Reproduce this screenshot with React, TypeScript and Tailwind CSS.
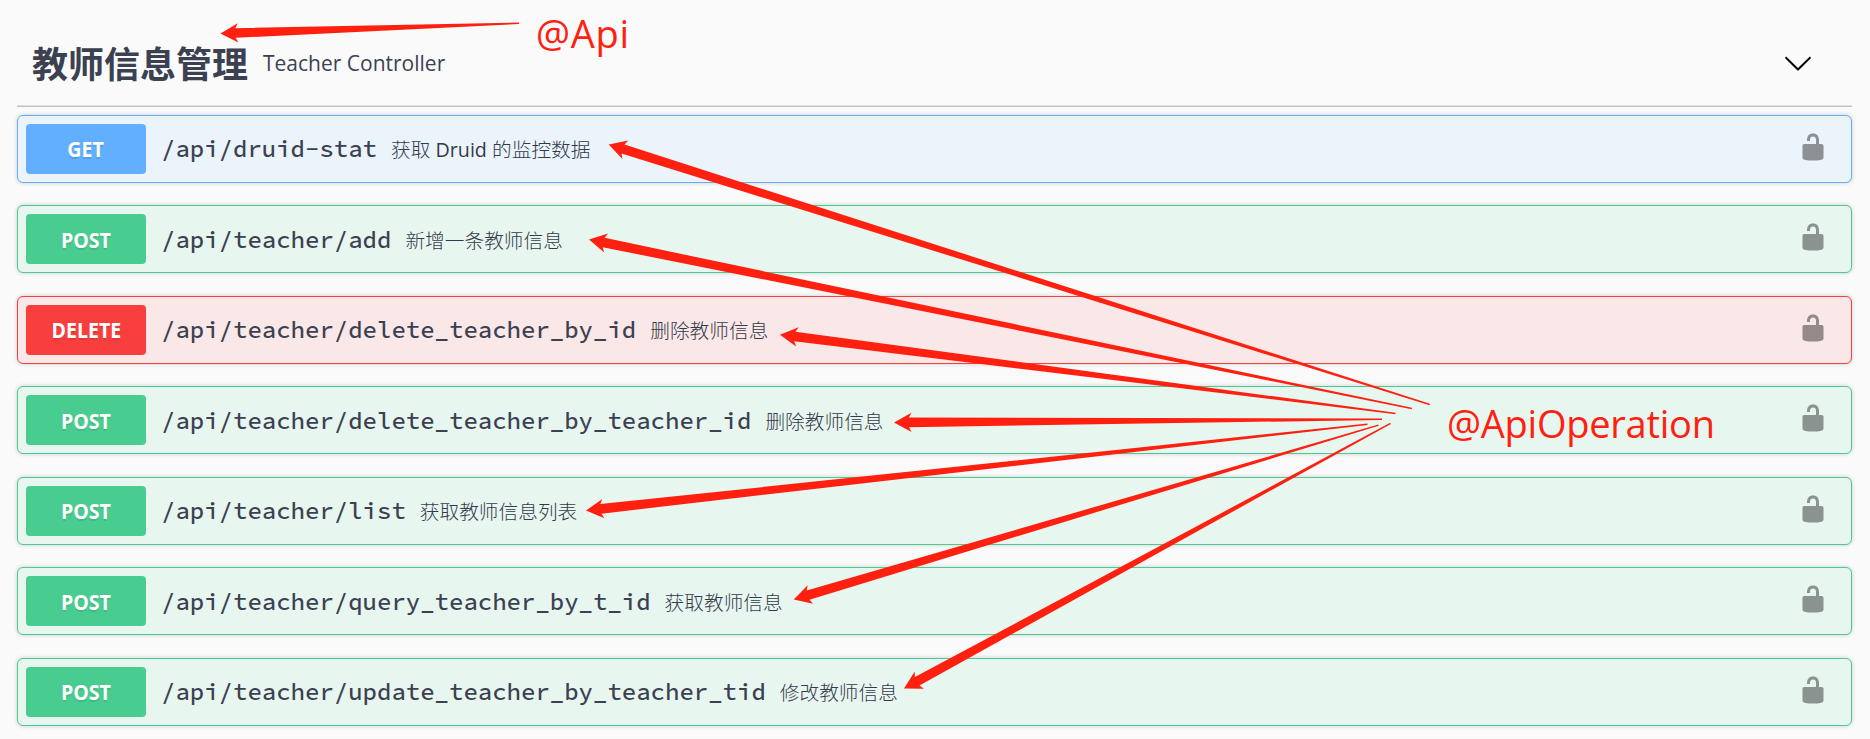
type Method = 'GET' | 'POST' | 'DELETE';

interface Operation {
  method: Method;
  path: string;
  summary: string;
}

interface Arrow {
  tip: [number, number];
  tail: [number, number];
}

const operations: Operation[] = [
  { method: 'GET', path: '/api/druid-stat', summary: '获取 Druid 的监控数据' },
  { method: 'POST', path: '/api/teacher/add', summary: '新增一条教师信息' },
  { method: 'DELETE', path: '/api/teacher/delete_teacher_by_id', summary: '删除教师信息' },
  { method: 'POST', path: '/api/teacher/delete_teacher_by_teacher_id', summary: '删除教师信息' },
  { method: 'POST', path: '/api/teacher/list', summary: '获取教师信息列表' },
  { method: 'POST', path: '/api/teacher/query_teacher_by_t_id', summary: '获取教师信息' },
  { method: 'POST', path: '/api/teacher/update_teacher_by_teacher_tid', summary: '修改教师信息' },
];

const arrows: Arrow[] = [
  { tip: [220.5, 33.5], tail: [519, 23.3] },
  { tip: [608.7, 144.5], tail: [1429.7, 404.5] },
  { tip: [589, 239.5], tail: [1411.8, 408.5] },
  { tip: [780, 334.7], tail: [1395.5, 413.5] },
  { tip: [894, 422.5], tail: [1382, 419.2] },
  { tip: [586, 510.5], tail: [1367.5, 424.3] },
  { tip: [793.7, 599.5], tail: [1378.5, 425.2] },
  { tip: [904, 688.5], tail: [1390.5, 423.3] },
];

const rowStyles: Record<Method, string> = {
  GET: 'border-[#61affe] bg-[#ebf3fb]',
  POST: 'border-[#49cc90] bg-[#e8f6f0]',
  DELETE: 'border-[#f93e3e] bg-[#fae7e7]',
};

const badgeStyles: Record<Method, string> = {
  GET: 'bg-[#61affe]',
  POST: 'bg-[#49cc90]',
  DELETE: 'bg-[#f93e3e]',
};

/** Outline of an arrow whose shaft narrows from the head to the tail. */
function arrowPoints({ tip, tail }: Arrow): string {
  const dx = tail[0] - tip[0];
  const dy = tail[1] - tip[1];
  const length = Math.hypot(dx, dy);
  const ux = dx / length;
  const uy = dy / length;
  const outline: [number, number][] = [
    [0, 0],
    [17.5, -9.7],
    [15, -4.8],
    [length, -0.7],
    [length, 0.7],
    [15, 4.8],
    [17.5, 9.7],
  ];
  return outline
    .map(([along, across]) => {
      const x = tip[0] + ux * along - uy * across;
      const y = tip[1] + uy * along + ux * across;
      return `${x.toFixed(2)},${y.toFixed(2)}`;
    })
    .join(' ');
}

function UnlockIcon() {
  return (
    <svg viewBox="0 0 20 20" className="h-[30px] w-[30px] fill-black opacity-40" aria-hidden="true">
      <path d="M15.8 8H14V5.6C14 2.703 12.665 1 10 1 7.334 1 6 2.703 6 5.6V6h2v-.801C8 3.754 8.797 3 10 3c1.203 0 2 .754 2 2.199V8H4c-.553 0-1 .646-1 1.199V17c0 .549.428 1.139.951 1.307l1.197.387C5.672 18.861 6.55 19 7.1 19h5.8c.549 0 1.428-.139 1.951-.307l1.196-.387c.524-.167.953-.757.953-1.306V9.199C17 8.646 16.352 8 15.8 8z" />
    </svg>
  );
}

function ChevronIcon() {
  return (
    <svg viewBox="0 0 20 20" className="-mt-0.5 h-[30px] w-[30px] fill-black" aria-hidden="true">
      <path d="M17.418 6.109c.272-.268.709-.268.979 0s.271.701 0 .969l-7.908 7.83c-.27.268-.707.268-.979 0l-7.908-7.83c-.27-.268-.27-.701 0-.969.271-.268.709-.268.979 0L10 13.25l7.418-7.141z" />
    </svg>
  );
}

function OperationRow({ method, path, summary }: Operation) {
  return (
    <li
      className={`flex h-[68px] items-center rounded-[6px] border pr-[23px] pl-2 shadow-[0_0_4.5px_rgba(0,0,0,0.19)] ${rowStyles[method]}`}
    >
      <span
        className={`flex h-[50px] w-[120px] shrink-0 items-center justify-center rounded-[4px] pt-[2px] text-[21px] leading-none font-bold text-white [text-shadow:0_1.5px_0_rgba(0,0,0,0.1)] ${badgeStyles[method]}`}
      >
        <span className="scale-x-[0.93]">{method}</span>
      </span>
      <span className="px-[15px] pt-px font-['Source_Code_Pro','Noto_Sans_Mono','Liberation_Mono',monospace] text-[24px] leading-none font-medium">
        {path}
      </span>
      <span className="-ml-px flex-1 pt-[2px] font-['Open_Sans','Noto_Sans_CJK_SC_Light','Noto_Sans_CJK_SC',sans-serif] text-[19.7px] leading-none text-[#343a4a]">
        {summary}
      </span>
      <span className="-mt-1">
        <UnlockIcon />
      </span>
    </li>
  );
}

export default function App() {
  return (
    <div className="relative h-[739px] w-[1870px] overflow-hidden bg-[#fafafa] pr-[18px] pl-[17px] font-['Open_Sans','Noto_Sans_CJK_SC',sans-serif] text-[#3b4151]">
      <header className="flex h-[107px] items-center border-b border-[#c0c1c5] pt-[21px] pr-[39px] pl-[15px] shadow-[inset_0_-1px_0_#dedfe1]">
        <h1 className="pt-[3px] text-[36px] leading-none font-bold">教师信息管理</h1>
        <span className="flex-1 pl-[15px] text-[21px] leading-none">Teacher Controller</span>
        <ChevronIcon />
      </header>

      <ul className="mt-[7.9px] flex flex-col gap-[22.5px]">
        {operations.map((operation) => (
          <OperationRow key={operation.path} {...operation} />
        ))}
      </ul>

      <svg viewBox="0 0 1870 739" className="pointer-events-none absolute inset-0 h-[739px] w-[1870px] fill-[#ff2010]" aria-hidden="true">
        {arrows.map((arrow) => (
          <polygon key={arrow.tip.join()} points={arrowPoints(arrow)} />
        ))}
      </svg>
      <span className="absolute top-[14px] left-[536px] text-[38px] leading-none tracking-[0.7px] text-[#ff2010]">@Api</span>
      <span className="absolute top-[404px] left-[1447px] text-[38px] leading-none tracking-[-0.25px] text-[#ff2010]">
        @ApiOperation
      </span>
    </div>
  );
}
